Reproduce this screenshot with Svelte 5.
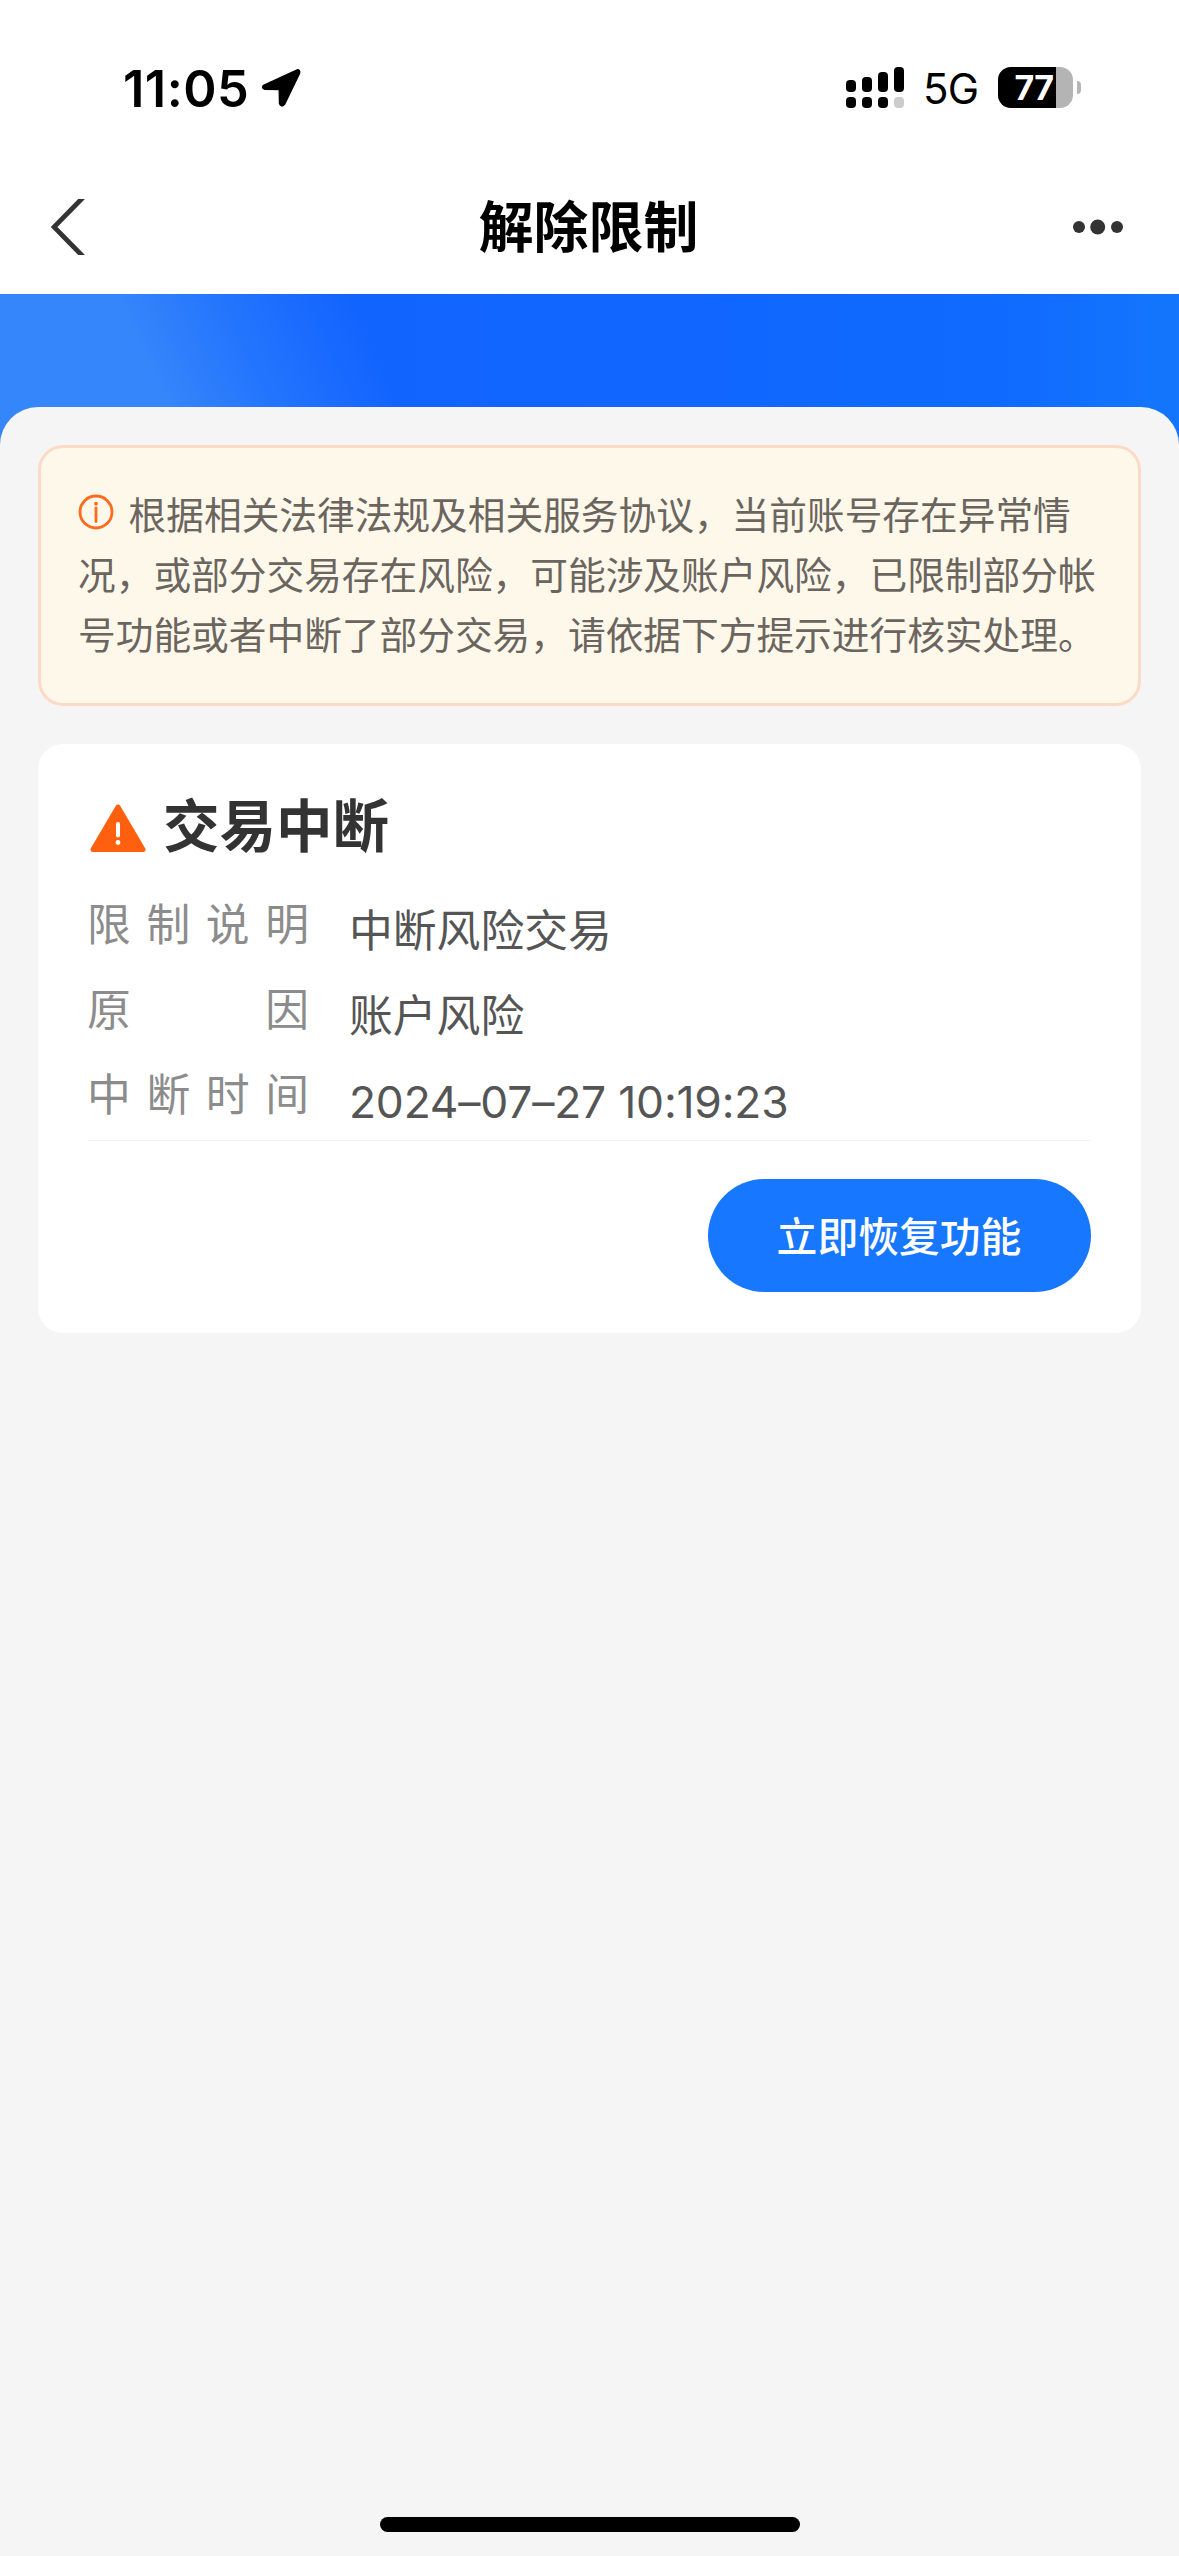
<script>
  const time = '11:05';
  const network = '5G';
  const battery = 77;

  // Signal rows: top bars grow in height, bottom dots show the second SIM
  const signal = [
    { height: 12, active: true },
    { height: 15, active: true },
    { height: 20, active: true },
    { height: 25, active: false }
  ];

  const notice = [
    '根据相关法律法规及相关服务协议，当前账号存在异常情',
    '况，或部分交易存在风险，可能涉及账户风险，已限制部分帐',
    '号功能或者中断了部分交易，请依据下方提示进行核实处理。'
  ];

  const details = [
    { label: '限制说明', value: '中断风险交易' },
    { label: '原因', value: '账户风险' },
    { label: '中断时间', value: '2024–07–27 10:19:23', numeric: true }
  ];
</script>

<div class="page">
  <div class="status-bar">
    <div class="status-left">
      <span class="time">{time}</span>
      <svg class="location" viewBox="0 0 40 40" width="40" height="40">
        <path d="M36.5 2.5 L2.8 18 Q1.5 20 4 20.5 L19 20.8 L19.3 35.5 Q20.5 38.5 22.8 36 L37.8 5 Q38.3 2.5 36.5 2.5 Z" fill="#000" stroke="#000" stroke-width="3" stroke-linejoin="round" />
      </svg>
    </div>
    <div class="status-right">
      <div class="signal">
        {#each signal as bar}
          <div class="signal-col">
            <span class="bar" style="height: {bar.height}px"></span>
            <span class="dot" class:off={!bar.active}></span>
          </div>
        {/each}
      </div>
      <span class="network">{network}</span>
      <div class="battery">
        <div class="battery-body">
          <div class="battery-fill" style="width: {battery}%"></div>
          <span class="battery-text">{battery}</span>
        </div>
        <div class="battery-cap"></div>
      </div>
    </div>
  </div>

  <header class="nav">
    <svg class="back" viewBox="0 0 34 56" width="34" height="56">
      <path d="M32 -1.5 L3 28 L32 57.5" fill="none" stroke="#333" stroke-width="4.8" />
    </svg>
    <h1>解除限制</h1>
    <svg class="more" viewBox="0 0 50 16" width="50" height="16">
      <circle cx="6" cy="8" r="6" fill="#333" />
      <circle cx="24.7" cy="8" r="7.5" fill="#333" />
      <circle cx="44" cy="8" r="6" fill="#333" />
    </svg>
  </header>

  <div class="hero"></div>

  <main class="panel">
    <section class="notice">
      <svg class="info" viewBox="0 0 36 36" width="36" height="36">
        <circle cx="18" cy="18" r="16" fill="none" stroke="#ff6a1f" stroke-width="2.8" />
        <circle cx="18" cy="9.7" r="1.9" fill="#ff6a1f" />
        <path d="M18 13.8 V27.5" stroke="#ff6a1f" stroke-width="2.8" stroke-linecap="round" />
      </svg>
      {#each notice as line}
        <span class="notice-line">{line}</span><br />
      {/each}
    </section>

    <section class="card">
      <div class="card-title">
        <svg viewBox="0 0 56 50" width="56" height="50">
          <path d="M28 4 L53 46.5 H3 Z" fill="#ff6010" stroke="#ff6010" stroke-width="5" stroke-linejoin="round" />
          <path d="M28 21 V32.5" stroke="#fff" stroke-width="4" stroke-linecap="round" />
          <circle cx="28" cy="39.5" r="2.4" fill="#fff" />
        </svg>
        <h2>交易中断</h2>
      </div>

      <div class="details">
        {#each details as item}
          <div class="row">
            <div class="label">
              {#each item.label as char}<span>{char}</span>{/each}
            </div>
            <div class="value" class:numeric={item.numeric}>{item.value}</div>
          </div>
        {/each}
      </div>

      <div class="actions">
        <button>立即恢复功能</button>
      </div>
    </section>
  </main>

  <div class="home-indicator"></div>
</div>

<style>
  :global(body) {
    margin: 0;
    background: #f5f5f5;
  }

  .page {
    display: flex;
    flex-direction: column;
    width: 1179px;
    height: 2556px;
    overflow: hidden;
    background: #f5f5f5;
    font-family: Inter, 'Noto Sans CJK SC', sans-serif;
  }

  .status-bar {
    display: flex;
    justify-content: space-between;
    height: 160px;
    padding: 0 98px 0 123px;
    background: #fff;
  }

  .status-left,
  .status-right {
    display: flex;
    align-items: center;
    height: 175px;
  }

  .time {
    width: 124px;
    margin-top: 1px;
    font-size: 50.5px;
    font-weight: 600;
    letter-spacing: 0.5px;
    color: #000;
    white-space: nowrap;
  }

  .location {
    margin-left: 14px;
  }

  .signal {
    display: flex;
    align-items: flex-end;
    gap: 6px;
  }

  .signal-col {
    display: flex;
    flex-direction: column;
    gap: 5px;
  }

  .bar,
  .dot {
    width: 10px;
    border-radius: 4px;
    background: #000;
  }

  .dot {
    height: 11px;
  }

  .dot.off {
    background: #ccc;
  }

  .network {
    width: 54px;
    margin: 2px 0 0 19px;
    font-size: 42px;
    letter-spacing: -0.8px;
    color: #000;
    white-space: nowrap;
  }

  .battery {
    display: flex;
    align-items: center;
    gap: 4px;
    margin-left: 21px;
  }

  .battery-body {
    position: relative;
    display: flex;
    align-items: center;
    justify-content: center;
    box-sizing: border-box;
    width: 75px;
    height: 41px;
    padding-right: 3px;
    border-radius: 13px;
    background: #b4b4b4;
    overflow: hidden;
  }

  .battery-fill {
    position: absolute;
    top: 0;
    bottom: 0;
    left: 0;
    background: #000;
  }

  .battery-text {
    position: relative;
    font-size: 34px;
    font-weight: 700;
    letter-spacing: -0.6px;
    color: #fff;
  }

  .battery-cap {
    width: 4px;
    height: 13px;
    border-radius: 0 4px 4px 0;
    background: #b4b4b4;
  }

  .nav {
    display: flex;
    align-items: center;
    justify-content: space-between;
    height: 134px;
    padding: 0 56px 0 51px;
    background: #fff;
  }

  .nav h1 {
    margin: 0 0 8px 19px;
    font-size: 54.9px;
    font-weight: 700;
    color: #000;
  }

  .hero {
    height: 153px;
    background:
      linear-gradient(65deg, #3585fb 0, #3585fb 170px, rgba(53, 133, 251, 0.45) 275px, rgba(53, 133, 251, 0) 380px),
      linear-gradient(90deg, #1264ff 0, #1264ff 400px, #0f6aff 1000px, #1476fc 100%);
  }

  .panel {
    flex: 1;
    margin-top: -40px;
    padding: 38px;
    border-radius: 38px 38px 0 0;
    background: #f5f5f5;
  }

  .notice {
    box-sizing: border-box;
    height: 261px;
    padding: 37px 0 0 37px;
    border: 3px solid #fbdbc6;
    border-radius: 25px;
    background: #fef8ea;
    color: #6b655f;
    font-size: 37.7px;
    line-height: 60.2px;
    white-space: nowrap;
  }

  .info {
    margin-right: 4px;
    vertical-align: -1px;
  }

  .card {
    box-sizing: border-box;
    height: 589px;
    margin-top: 38px;
    padding: 49px 50px 0;
    border-radius: 25px;
    background: #fff;
  }

  .card-title {
    display: flex;
    align-items: center;
    height: 66px;
  }

  .card-title svg {
    margin: 3px 17px 0 2px;
  }

  .card-title h2 {
    margin: 0 0 8px;
    font-size: 56.5px;
    font-weight: 700;
    color: #333;
  }

  .details {
    display: flex;
    flex-direction: column;
    height: 246px;
    margin-top: 35px;
    border-bottom: 1px solid #f3f3f3;
  }

  .row {
    display: flex;
    flex: none;
    height: 85px;
    font-size: 43.8px;
    line-height: 64px;
  }

  .label {
    display: flex;
    justify-content: space-between;
    width: 222px;
    margin-left: -1px;
    color: #8c8c8c;
  }

  .value {
    margin: 6px 0 0 40px;
    color: #555;
    white-space: nowrap;
  }

  .numeric {
    font-size: 44.4px;
    letter-spacing: -0.2px;
  }

  .actions {
    display: flex;
    justify-content: flex-end;
    margin-top: 38px;
  }

  button {
    width: 383px;
    height: 113px;
    padding: 0 1px 2px 0;
    border: none;
    border-radius: 57px;
    background: #1777ff;
    color: #fff;
    font-family: inherit;
    font-size: 40.8px;
    font-weight: 500;
  }

  .home-indicator {
    flex: none;
    align-self: center;
    width: 420px;
    height: 15px;
    margin-bottom: 24px;
    border-radius: 8px;
    background: #000;
  }
</style>
